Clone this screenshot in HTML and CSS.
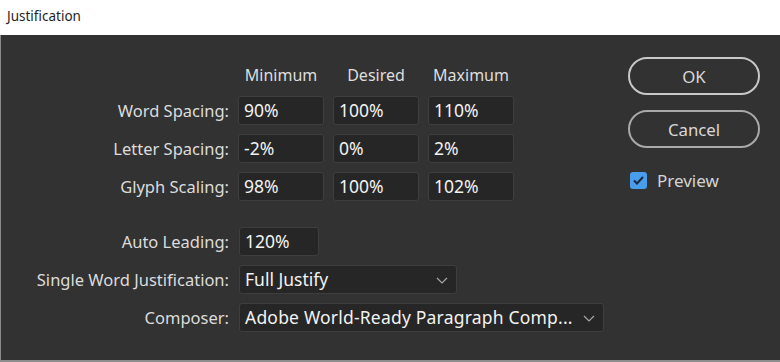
FILE: index.html
```html
<!DOCTYPE html>
<html lang="en">
  <head>
    <meta charset="UTF-8" />
    <meta name="viewport" content="width=device-width, initial-scale=1.0" />
    <title>Justification</title>
    <link rel="stylesheet" href="styles.css">
  </head>
  <body>
    <div class="titlebar">Justification</div>

    <div class="dialog">
      <div class="form">
        <div></div>
        <div class="col-head">Minimum</div>
        <div class="col-head">Desired</div>
        <div class="col-head">Maximum</div>

        <label class="label">Word Spacing:</label>
        <div class="field">90%</div>
        <div class="field">100%</div>
        <div class="field">110%</div>

        <label class="label">Letter Spacing:</label>
        <div class="field">-2%</div>
        <div class="field">0%</div>
        <div class="field">2%</div>

        <label class="label">Glyph Scaling:</label>
        <div class="field">98%</div>
        <div class="field">100%</div>
        <div class="field">102%</div>

        <div class="spacer"></div>

        <label class="label">Auto Leading:</label>
        <div class="field leading">120%</div>

        <label class="label">Single Word Justification:</label>
        <div class="field select single">
          Full Justify
          <svg class="chevron" width="12" height="7" viewBox="0 0 12 7"><path d="M1 1l5 5 5-5" fill="none" stroke="#a8a8a8" stroke-width="1.2"/></svg>
        </div>

        <label class="label">Composer:</label>
        <div class="field select composer">
          Adobe World-Ready Paragraph Comp...
          <svg class="chevron" width="12" height="7" viewBox="0 0 12 7"><path d="M1 1l5 5 5-5" fill="none" stroke="#a8a8a8" stroke-width="1.2"/></svg>
        </div>
      </div>

      <div class="actions">
        <button class="btn">OK</button>
        <button class="btn cancel">Cancel</button>
        <label class="preview">
          <span class="check">
            <svg width="13" height="11" viewBox="0 0 13 11"><path d="M2 5.5l3 3 6-6.5" fill="none" stroke="#1b2a3a" stroke-width="2"/></svg>
          </span>
          Preview
        </label>
      </div>
    </div>
  </body>
</html>
```

FILE: styles.css
```css
* {
  margin: 0;
  padding: 0;
  box-sizing: border-box;
  font-family: "Noto Sans", "Open Sans", sans-serif;
}

body {
  background: #ffffff;
  width: 780px;
  height: 362px;
  overflow: hidden;
}

.titlebar {
  height: 35px;
  padding: 7px 7px 0;
  font-size: 13.5px;
  color: #1f1f1f;
}

.dialog {
  height: 327px;
  background: #323232;
  border-left: 1px solid #8a8a8a;
  border-bottom: 2px solid #8d8d8d;
  display: flex;
}

.form {
  display: grid;
  grid-template-columns: 228px 86px 86px 86px;
  grid-template-rows: 24px repeat(3, 29px) 8px repeat(3, 29px);
  column-gap: 9px;
  row-gap: 9px;
  padding-top: 28px;
  width: 600px;
  align-content: start;
}

.spacer {
  grid-column: 1 / -1;
}

.col-head {
  font-size: 16px;
  color: #dedede;
  text-align: center;
  line-height: 24px;
}

.label {
  grid-column: 1;
  text-align: right;
  font-size: 16.5px;
  color: #dcdcdc;
  line-height: 29px;
}

.field {
  background: #262626;
  border: 1px solid #3e3e3e;
  border-radius: 3px;
  color: #f2f2f2;
  font-size: 17.5px;
  line-height: 27px;
  padding-left: 5px;
  white-space: nowrap;
}

.leading {
  grid-column: 2 / span 2;
  width: 80px;
  margin-left: 1px;
}

.select {
  grid-column: 2 / span 3;
  margin-left: 1px;
  position: relative;
}

.single {
  width: 218px;
}

.composer {
  width: 365px;
  letter-spacing: 0.2px;
}

.chevron {
  position: absolute;
  right: 8px;
  top: 11px;
}

.actions {
  margin-left: 27px;
  padding-top: 22px;
  display: flex;
  flex-direction: column;
}

.btn {
  width: 132px;
  height: 38px;
  border: 2px solid #c8c8c8;
  border-radius: 19px;
  background: transparent;
  color: #d8d8d8;
  font-size: 16.8px;
}

.cancel {
  margin-top: 15px;
  border-color: #a9a9a9;
}

.preview {
  margin-top: 21px;
  margin-left: 2px;
  display: flex;
  align-items: center;
  gap: 10px;
  color: #d4d4d4;
  font-size: 17px;
}

.check {
  width: 17px;
  height: 17px;
  border-radius: 3px;
  background: #4a9cec;
  display: flex;
  align-items: center;
  justify-content: center;
}
```
